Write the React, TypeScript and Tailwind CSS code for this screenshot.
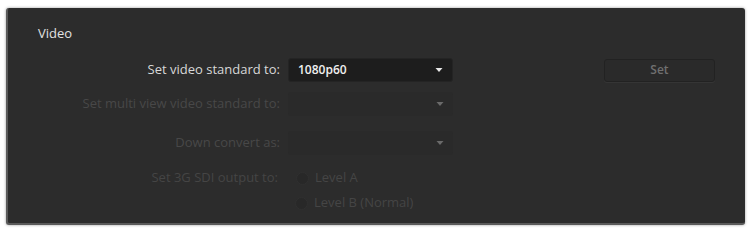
import React from "react";

const Arrow = ({ dim }: { dim?: boolean }) => (
  <svg width="8" height="6" viewBox="0 0 8 6" className="shrink-0">
    <path d="M0.5 1 L7.5 1 L4 5 Z" fill={dim ? "#6a6a6a" : "#e8e8e8"} />
  </svg>
);

const Radio = () => (
  <span className="w-[13px] h-[13px] rounded-full bg-[#282828] border border-[#303030] shrink-0" />
);

export default function App() {
  return (
    <div
      className="w-[748px] h-[229px] bg-white pt-[8px] pl-[6px] pr-[3px] pb-[4px]"
      style={{ fontFamily: '"Open Sans", "Noto Sans", sans-serif' }}
    >
      <div className="w-full h-full bg-[#2c2c2c] rounded-[3px] border-l-2 border-b-2 border-[#5a5a5a] shadow-[0_0_3px_rgba(0,0,0,0.4)] flex flex-col text-[13px]">
        <div className="pl-[30px] pt-[17px] text-[13px] text-[#e2e2e2] leading-[16px]">Video</div>
        <div className="flex items-center mt-[17px] h-[24px]">
          <div className="w-[272px] text-right text-[#d8d8d8]">Set video standard to:</div>
          <div className="ml-[8px] w-[165px] h-[24px] rounded-[3px] bg-[#1d1d1d] border border-[#242424] flex items-center justify-between pl-[9px] pr-[9px]">
            <span className="text-[#f0f0f0] text-[12px] font-semibold">1080p60</span>
            <Arrow />
          </div>
          <div className="ml-[151px] w-[111px] h-[23px] rounded-[3px] bg-[#2a2a2a] border border-[#222] shadow-[0_1px_0_#353535] flex items-center justify-center text-[#707070] font-semibold text-[12px]">
            Set
          </div>
        </div>
        <div className="flex items-center mt-[10px] h-[24px]">
          <div className="w-[272px] text-right text-[#484848]">Set multi view video standard to:</div>
          <div className="ml-[8px] w-[165px] h-[24px] rounded-[3px] bg-[#2a2a2a] flex items-center justify-end pr-[9px]">
            <Arrow dim />
          </div>
        </div>
        <div className="flex items-center mt-[15px] h-[24px]">
          <div className="w-[272px] text-right text-[#484848]">Down convert as:</div>
          <div className="ml-[8px] w-[165px] h-[24px] rounded-[3px] bg-[#2a2a2a] flex items-center justify-end pr-[9px]">
            <Arrow dim />
          </div>
        </div>
        <div className="flex items-center mt-[15px] h-[16px]">
          <div className="w-[270px] text-right text-[#454545]">Set 3G SDI output to:</div>
          <div className="ml-[18px] flex items-center gap-[6px] text-[#454545]">
            <Radio />
            <span>Level A</span>
          </div>
        </div>
        <div className="flex items-center mt-[9px] h-[16px]">
          <div className="ml-[287px] flex items-center gap-[6px] text-[#454545]">
            <Radio />
            <span>Level B (Normal)</span>
          </div>
        </div>
      </div>
    </div>
  );
}
